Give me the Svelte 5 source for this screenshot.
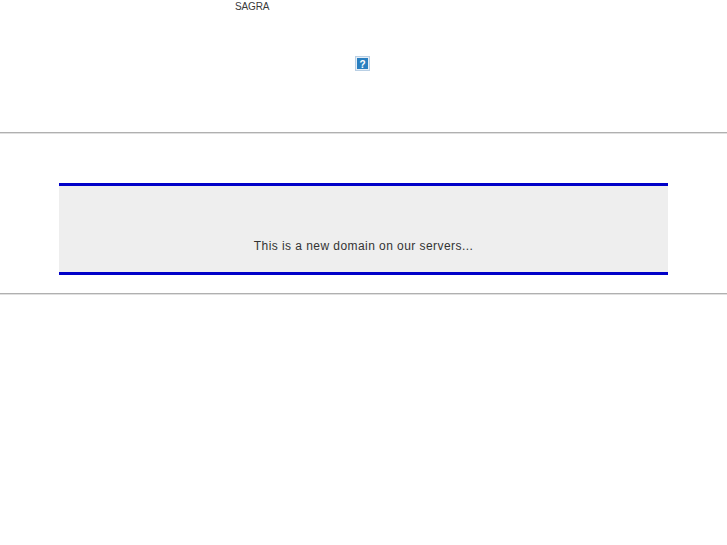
<script>
  const brand = 'SAGRA';
  const message = 'This is a new domain on our servers...';
</script>

<div class="page">
  <header class="top">
    <div class="brand">{brand}</div>
    <div class="broken">
      <svg width="15" height="15" viewBox="0 0 15 15" role="img" aria-label="missing image">
        <rect x="0.5" y="0.5" width="14" height="14" fill="#e6eef6" stroke="#b9cfe4" />
        <rect x="2" y="2" width="11" height="11" fill="#2a7fc0" />
        <text x="7.5" y="11.5" class="mark">?</text>
      </svg>
    </div>
  </header>

  <hr />

  <section class="notice">
    <p>{message}</p>
  </section>

  <hr />
</div>

<style>
  :global(body) {
    margin: 0;
    background: #fff;
  }

  .page {
    width: 727px;
    height: 545px;
    font-family: "Liberation Sans", Arial, sans-serif;
    color: #333;
  }

  .top {
    height: 132px;
    display: flex;
    flex-direction: column;
  }

  .brand {
    padding: 1px 0 0 235px;
    font-size: 10px;
    line-height: 12px;
    letter-spacing: -0.15px;
    color: #3a3a3a;
  }

  .broken {
    display: flex;
    justify-content: center;
    padding-top: 43px;
    padding-right: 2px;
  }

  .broken svg {
    display: block;
  }

  .mark {
    font-family: "Liberation Sans", Arial, sans-serif;
    font-size: 10px;
    font-weight: bold;
    text-anchor: middle;
    fill: #fff;
  }

  hr {
    margin: 0;
    height: 2px;
    border: none;
    border-top: 1px solid #b0b0b0;
    border-bottom: 1px solid #e0e0e0;
    box-sizing: border-box;
  }

  .notice {
    box-sizing: border-box;
    width: 609px;
    height: 92px;
    margin: 49px 0 18px 59px;
    background: #eee;
    border-top: 3px solid #0000c8;
    border-bottom: 3px solid #0000c8;
    display: flex;
    justify-content: center;
    align-items: flex-end;
  }

  .notice p {
    margin: 0 0 18px;
    font-size: 12px;
    line-height: 16px;
    letter-spacing: 0.44px;
    color: #333;
  }
</style>
